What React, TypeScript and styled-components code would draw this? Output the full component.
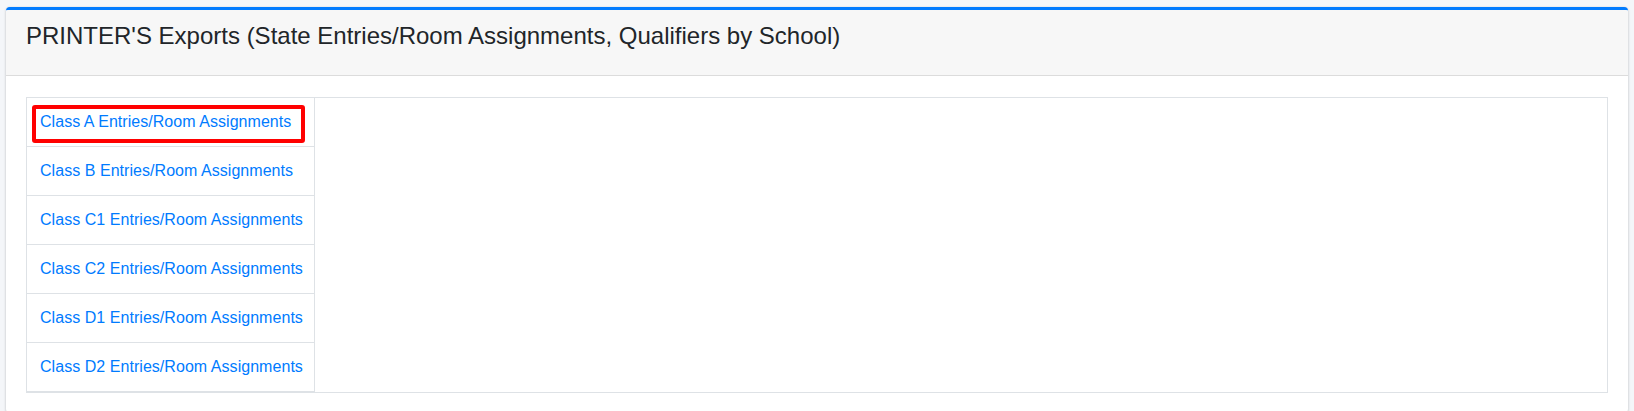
import React from "react";
import styled, { createGlobalStyle } from "styled-components";

const GlobalStyle = createGlobalStyle`
  * { box-sizing: border-box; }
  html, body { margin: 0; padding: 0; }
  body {
    background: #f4f6f9;
    font-family: "Liberation Sans", Arial, Helvetica, sans-serif;
    font-size: 16px;
    line-height: 1.5;
    color: #212529;
  }
`;

const Page = styled.div`
  padding: 7px 6px 0;
`;

const Card = styled.section`
  background: #ffffff;
  border-top: 3px solid #007bff;
  border-radius: 4px;
  box-shadow: 0 0 1px rgba(0, 0, 0, 0.125), 0 1px 3px rgba(0, 0, 0, 0.2);
  overflow: hidden;
`;

const CardHeader = styled.header`
  background: #f7f7f7;
  border-bottom: 1px solid #dcdcdc;
  padding: 12px 20px;
`;

const Title = styled.h4`
  margin: 0 0 12px;
  font-size: 24px;
  font-weight: 400;
  line-height: 28.8px;
  color: #212529;
`;

const CardBody = styled.div`
  padding: 21px 20px 20px 20px;
`;

const ExportTable = styled.div`
  display: flex;
  border: 1px solid #dee2e6;
`;

const LinkColumn = styled.ul`
  list-style: none;
  margin: 0;
  padding: 0;
  width: 288px;
  flex: 0 0 288px;
  border-right: 1px solid #dee2e6;
`;

const LinkRow = styled.li`
  position: relative;
  height: 49px;
  padding: 12px 12px 12px 13px;
  border-bottom: 1px solid #dee2e6;
`;

const ExportLink = styled.a`
  color: #007bff;
  text-decoration: none;
  white-space: nowrap;
  font-size: 16px;
  line-height: 24px;
  letter-spacing: 0.045px;
`;

const Highlight = styled.span`
  position: absolute;
  left: 5px;
  top: 7px;
  width: 273px;
  height: 38px;
  border: 4px solid #ff0000;
  border-radius: 3px;
  pointer-events: none;
`;

const Preview = styled.div`
  flex: 1;
`;

const exportsList = [
  "Class A Entries/Room Assignments",
  "Class B Entries/Room Assignments",
  "Class C1 Entries/Room Assignments",
  "Class C2 Entries/Room Assignments",
  "Class D1 Entries/Room Assignments",
  "Class D2 Entries/Room Assignments",
];

export default function App() {
  return (
    <>
      <GlobalStyle />
      <Page>
        <Card>
          <CardHeader>
            <Title>PRINTER'S Exports (State Entries/Room Assignments, Qualifiers by School)</Title>
          </CardHeader>
          <CardBody>
            <ExportTable>
              <LinkColumn>
                {exportsList.map((label, i) => (
                  <LinkRow key={label}>
                    <ExportLink href="#">{label}</ExportLink>
                    {i === 0 && <Highlight />}
                  </LinkRow>
                ))}
              </LinkColumn>
              <Preview />
            </ExportTable>
          </CardBody>
        </Card>
      </Page>
    </>
  );
}
